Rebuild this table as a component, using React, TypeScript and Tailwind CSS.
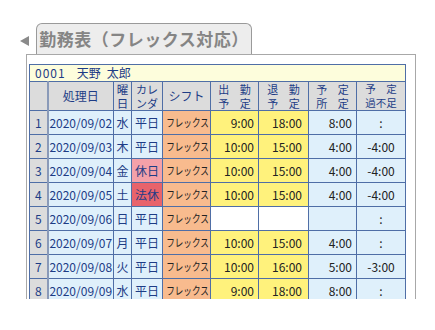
import React from "react";

type Row = {
  no: number;
  date: string;
  dow: string;
  cal: string;
  calType?: "holiday" | "legal";
  start: string;
  end: string;
  plan: string;
  diff: string;
  blank?: boolean;
};

const rows: Row[] = [
  { no: 1, date: "2020/09/02", dow: "水", cal: "平日", start: "9:00", end: "18:00", plan: "8:00", diff: ":" },
  { no: 2, date: "2020/09/03", dow: "木", cal: "平日", start: "10:00", end: "15:00", plan: "4:00", diff: "-4:00" },
  { no: 3, date: "2020/09/04", dow: "金", cal: "休日", calType: "holiday", start: "10:00", end: "15:00", plan: "4:00", diff: "-4:00" },
  { no: 4, date: "2020/09/05", dow: "土", cal: "法休", calType: "legal", start: "10:00", end: "15:00", plan: "4:00", diff: "-4:00" },
  { no: 5, date: "2020/09/06", dow: "日", cal: "平日", start: "", end: "", plan: "", diff: ":", blank: true },
  { no: 6, date: "2020/09/07", dow: "月", cal: "平日", start: "10:00", end: "15:00", plan: "4:00", diff: ":" },
  { no: 7, date: "2020/09/08", dow: "火", cal: "平日", start: "10:00", end: "16:00", plan: "5:00", diff: "-3:00" },
  { no: 8, date: "2020/09/09", dow: "水", cal: "平日", start: "9:00", end: "18:00", plan: "8:00", diff: ":" },
];

const cell = "border border-[#4f6ea6] h-[24px] p-0 leading-none whitespace-nowrap";
const head = "border border-[#4f6ea6] p-0 leading-[14px] whitespace-nowrap";

const App = () => {
  return (
    <div
      className="w-[435px] h-[330px] bg-white pt-[23px] pl-[20px]"
      style={{ fontFamily: '"Noto Sans CJK JP", "Noto Sans", sans-serif' }}
    >
      {/* Title tab */}
      <div className="flex items-start">
        <div className="w-0 h-0 mt-[13px] border-y-[5px] border-y-transparent border-r-[9px] border-r-[#8a8a8a]" />
        <div className="ml-[7px] w-[216px] h-[31px] rounded-t-[6px] border border-b-0 border-[#9a9a9a] bg-[#ededed] flex items-center justify-center text-[17px] font-bold text-[#858585] tracking-[0.5px]">
          勤務表（フレックス対応）
        </div>
      </div>

      {/* Frame */}
      <div className="ml-[6px] w-[390px] h-[245px] border border-b-0 border-[#a8a8a8] overflow-hidden pt-[9px] pl-[2px]">
        <table className="table-fixed border-collapse w-[376px] text-[11px]">
          <colgroup>
            <col className="w-[18px]" />
            <col className="w-[66px]" />
            <col className="w-[18px]" />
            <col className="w-[31px]" />
            <col className="w-[48px]" />
            <col className="w-[48px]" />
            <col className="w-[50px]" />
            <col className="w-[48px]" />
            <col className="w-[49px]" />
          </colgroup>
          <tbody>
            <tr>
              <td colSpan={9} className="border border-[#4f6ea6] h-[17px] p-0 bg-[#fdfddc] text-[#1d3c86] text-[12px] pl-[5px] leading-none">
                <span className="tracking-[1px]">0001</span>
                <span className="ml-[11px]">天野</span>
                <span className="ml-[6px]">太郎</span>
              </td>
            </tr>
            <tr className="bg-[#dcdcdc] text-[#1d3c86] text-[11px] text-center">
              <td className={`${head} border-r-[2px] border-r-[#8a9ab8] h-[29px]`}></td>
              <td className={`${head} text-[12px]`}>処理日</td>
              <td className={`${head} text-[11.5px]`}>
                <div>曜</div>
                <div>日</div>
              </td>
              <td className={head}>
                <div>カレ</div>
                <div>ンダ</div>
              </td>
              <td className={`${head} text-[12px]`}>シフト</td>
              <td className={`${head} tracking-[4px] pl-[4px]`}>
                <div>出 勤</div>
                <div>予 定</div>
              </td>
              <td className={`${head} tracking-[4px] pl-[4px]`}>
                <div>退 勤</div>
                <div>予 定</div>
              </td>
              <td className={`${head} tracking-[4px] pl-[4px]`}>
                <div>予 定</div>
                <div>所 定</div>
              </td>
              <td className={`${head} text-[10.5px]`}>
                <div>予　定</div>
                <div>過不足</div>
              </td>
            </tr>
            {rows.map((r) => (
              <tr key={r.no} className="text-[12px]">
                <td className={`${cell} border-r-[2px] border-r-[#8a9ab8] bg-[#dcdcdc] text-center text-[#1d3c86]`}>{r.no}</td>
                <td className={`${cell} bg-[#dff0fb] text-center text-[#1d3c86]`}>{r.date}</td>
                <td className={`${cell} bg-[#dff0fb] text-center text-[#1d3c86]`}>{r.dow}</td>
                <td
                  className={`${cell} text-center text-[#1d3c86] ${
                    r.calType === "holiday" ? "bg-[#f4a1a9]" : r.calType === "legal" ? "bg-[#e8636b]" : "bg-[#dff0fb]"
                  }`}
                >
                  {r.cal}
                </td>
                <td className={`${cell} bg-[#f8bb8e] text-[#222]`}>
                  <span className="block w-[55px] ml-[-3.5px] text-center text-[11px] scale-x-[0.78]">フレックス</span>
                </td>
                <td className={`${cell} ${r.blank ? "bg-white" : "bg-[#fff27c]"} text-right pr-[4px] text-[#222]`}>{r.start}</td>
                <td className={`${cell} ${r.blank ? "bg-white" : "bg-[#fff27c]"} text-right pr-[6px] text-[#222]`}>{r.end}</td>
                <td className={`${cell} bg-[#dff0fb] text-right pr-[4px] text-[#222]`}>{r.plan}</td>
                <td className={`${cell} bg-[#dff0fb] text-center text-[#222]`}>{r.diff}</td>
              </tr>
            ))}
          </tbody>
        </table>
      </div>
    </div>
  );
};

export default App;
